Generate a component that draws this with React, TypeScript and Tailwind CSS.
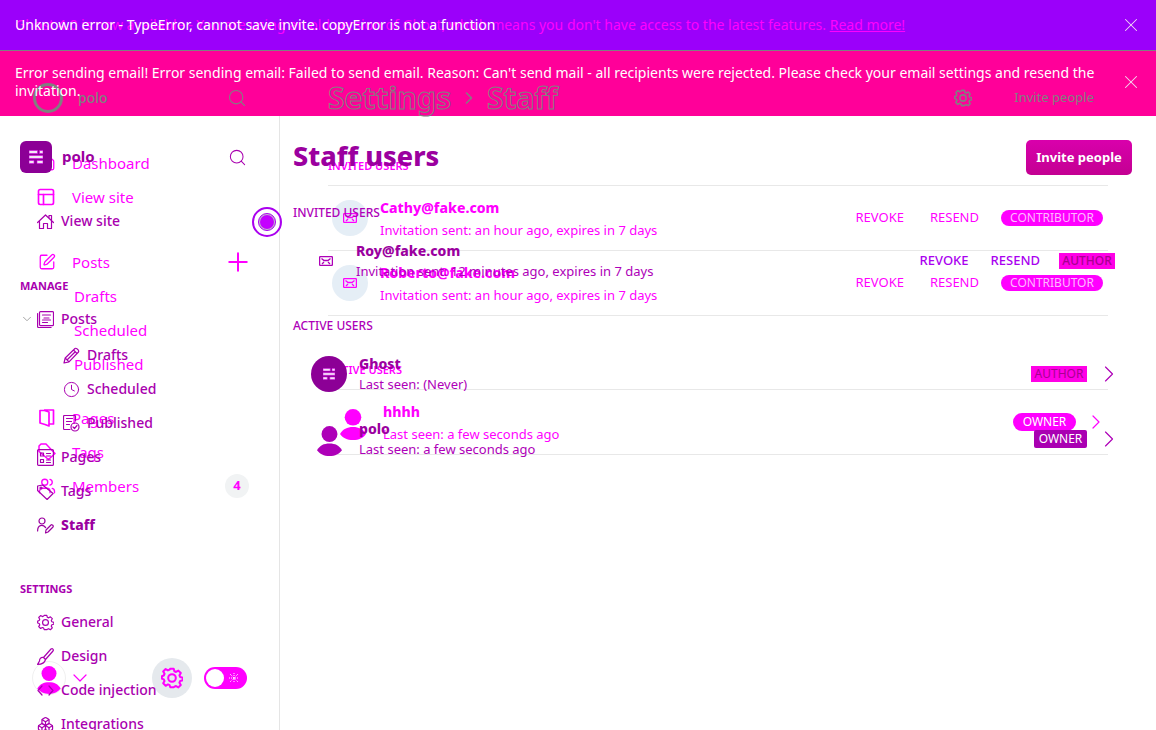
import React from "react";
import {
  House, Search, PanelsTopLeft, SquarePen, Plus, Tag, Users, ChevronDown, ChevronRight,
  Clock, Boxes, X,
} from "lucide-react";

function Gear({ className = "", stroke = 1.5 }: { className?: string; stroke?: number }) {
  return (
    <svg viewBox="-1 -1 26 26" className={className} fill="none" stroke="currentColor" strokeWidth={stroke} strokeLinejoin="round" aria-hidden="true">
      <path d="M10 1h4l.8 3 2 .9 2.700-1.600 2.900 2.900-1.600 2.700.900 2 3 .900v2.800l-3 .900-.9 2 1.600 2.700-2.900 2.900-2.700-1.600-2 .900L14 23h-4l-.8-2.500-2-.900-2.700 1.600-2.900-2.900 1.600-2.700-.9-2-2.300-.900v-2.800l2.300-.9.9-2-1.600-2.700 2.900-2.900 2.700 1.600 2-.9z" />
      <circle cx="12" cy="12" r="4.500" />
    </svg>
  );
}

function Glyph({ children }: { children: React.ReactNode }) {
  return (
    <svg viewBox="0 0 17 17" className="size-[17px] shrink-0" fill="none" stroke="currentColor" strokeWidth="1.2" strokeLinecap="round" strokeLinejoin="round" aria-hidden="true">
      {children}
    </svg>
  );
}

const HomeIcon = () => (
  <Glyph><path d="M.6 9.500L8.500 2l8 7.500M12 5V2.500h2.500v5M2.500 8v7.500h4v-5h4v5h4V8" /></Glyph>
);
const StackIcon = () => (
  <Glyph><rect x="2.500" y=".6" width="14" height="14" rx="1" /><path d="M.6 2.500v13a1 1 0 0 0 1 1h12.500M5.500 4h8M7 7h5M5.500 9h8M5.500 11.500h5" /></Glyph>
);
const PencilIcon = () => (
  <Glyph><path d="M1 16l1.200-5L12 1.500c1-1 4.500 2 3.500 3.500L6 14.800 1 16zM10.500 3l3.500 3.500M2.200 11L6 14.800M4.500 12.500l7.500-7.500" /></Glyph>
);
const PublishedIcon = () => (
  <Glyph><path d="M7 14.500H1.500a1 1 0 0 1-1-1v-12a1 1 0 0 1 1-1h10a1 1 0 0 1 1 1V6M3.500 3.500h6M3.500 6.500h5M3.500 9.500h3" /><circle cx="12" cy="12" r="4" /><path d="M10 12l1.500 1.500 2.500-3" /></Glyph>
);
const PagesIcon = () => (
  <Glyph><rect x=".6" y=".6" width="15.800" height="15.800" rx="1" /><path d="M3.500 4h3v3h-3zM3.500 10.500h3v3h-3zM9.500 4.500h4M9.500 7h4M9.500 11h4M9.500 13.500h4" /></Glyph>
);
const StaffIcon = () => (
  <Glyph><circle cx="5" cy="4" r="3" /><path d="M.6 14c0-6 5-7 8-3.500M8.500 16l.5-3 5-5c1-1 3 1 2 2l-5 5z" /></Glyph>
);
const TagIcon = () => (
  <Glyph><path d="M.6 7.500V3l5-1 10.500 8.500-6 6L.6 7.500z" /><circle cx="4" cy="5" r="1" /></Glyph>
);
const BrushIcon = () => (
  <Glyph><path d="M6.500 9.500L14 1c1.500-1 3 .5 2 2L8.500 11.500M6.500 9.500l2 2M6.500 9.500C3.500 9 2.500 11 2.500 13L.6 16.400c4 0 7-1 7.900-4.900" /></Glyph>
);
const CodeIcon = () => (
  <Glyph><path d="M5 4L1 8.500 5 13M12 4l4 4.500L12 13" /></Glyph>
);
const BookIcon = () => (
  <svg viewBox="0 0 18 18" className="size-[18px] shrink-0" fill="none" stroke="currentColor" strokeWidth="1.700" strokeLinejoin="round" aria-hidden="true">
    <path d="M2 1.500h4.500L11 3v14l-4-1.500-5-1.500zM6 1h9.500v14H11" />
  </svg>
);
const LabelIcon = () => (
  <svg viewBox="0 0 18 18" className="size-[18px] shrink-0" fill="none" stroke="currentColor" strokeWidth="1.500" strokeLinejoin="round" aria-hidden="true">
    <path d="M1 8.500V3l2-2h5l9 9.500-6.500 6z" />
  </svg>
);

function Mail() {
  return (
    <svg viewBox="0 0 14 10" className="h-[10px] w-[14px]" fill="none" stroke="currentColor" strokeWidth="1.300" aria-hidden="true">
      <rect x=".6" y=".6" width="12.800" height="8.800" rx="1" />
      <path d="M2.500 2.500L5 4.500h4l2.500-2M3 8l2-2M11 8L9 6" />
    </svg>
  );
}

function Person({ className }: { className: string }) {
  return (
    <svg viewBox="0 0 26 31" className={className} fill="currentColor" aria-hidden="true">
      <ellipse cx="13" cy="8.300" rx="8.300" ry="8.300" />
      <path d="M0 25c3-5 7-7 13-7s10 2 13 7c-3 4-7 6-13 6S3 29 0 25z" />
    </svg>
  );
}

function LogoMark({ className }: { className: string }) {
  return (
    <svg viewBox="0 0 14 14" className={className} aria-hidden="true">
      <path d="M0 .5h8.500v3H0zM10.500.5H14v3h-3.500zM0 5.500h14v3H0zM0 10.500h5v3H0zM8 10.500h6v3H8z" fill="#f3e6f5" stroke="#d400e6" strokeWidth=".6" />
    </svg>
  );
}

function SiteLink({ icon, label, extra }: { icon?: React.ReactNode; label: string; extra?: React.ReactNode }) {
  return (
    <li className="flex h-[34px] items-center">
      <a href="#" className={icon ? "flex items-center gap-4" : "pl-9"}>
        {icon}
        {label}
      </a>
      {extra && <span className="ml-auto flex">{extra}</span>}
    </li>
  );
}

function SiteSidebar() {
  return (
    <aside className="flex w-[280px] shrink-0 flex-col border-r border-[#e5e5e5] pt-[30px] pr-[30px] pb-8 pl-[38px] text-[15px] text-[#ff00ff]">
      <ul>
        <SiteLink icon={<House className="size-[18px]" strokeWidth={1.7} />} label="Dashboard" />
        <SiteLink icon={<PanelsTopLeft className="size-[20px] -ml-0.5" strokeWidth={2} />} label="View site" />
      </ul>
      <ul className="mt-[31px]">
        <SiteLink
          icon={<SquarePen className="size-[18px]" strokeWidth={1.7} />}
          label="Posts"
          extra={<button type="button" aria-label="New post" className="-mr-1"><Plus className="size-[30px]" strokeWidth={1.6} /></button>}
        />
        <SiteLink label="Drafts" />
        <SiteLink label="Scheduled" />
        <SiteLink label="Published" />
      </ul>
      <ul className="mt-5">
        <SiteLink icon={<BookIcon />} label="Pages" />
        <SiteLink icon={<LabelIcon />} label="Tags" />
        <SiteLink
          icon={<Users className="size-[18px]" strokeWidth={1.8} />}
          label="Members"
          extra={<span className="flex size-6 items-center justify-center rounded-full bg-[#f1f3f4] text-[13px] font-bold">4</span>}
        />
      </ul>
      <div className="mt-auto flex h-10 items-center">
        <button type="button" aria-label="Account" className="-ml-[6px] flex items-center gap-0.5">
          <span className="flex size-[34px] items-center justify-center rounded-full border border-[#f0f0f0] pt-1">
            <Person className="h-7 w-6 shrink-0" />
          </span>
          <ChevronDown className="size-6" strokeWidth={1.2} />
        </button>
        <div className="ml-auto flex items-center gap-3 pr-0.5">
          <button type="button" aria-label="Settings" className="flex size-10 items-center justify-center rounded-full bg-[#e5e9ed]">
            <Gear className="size-[22px]" stroke={2.4} />
          </button>
          <button type="button" role="switch" aria-checked="false" aria-label="Night mode" className="flex h-[22px] w-[43px] items-center justify-between rounded-full bg-[#ff00ff] px-0.5">
            <span className="size-[18px] rounded-full bg-white" />
            <svg viewBox="0 0 10 10" className="mr-1.5 size-2.5" stroke="#ffffff" strokeDasharray="1 1" aria-hidden="true">
              <path d="M1 1l8 8M9 1L1 9M5 0v10M0 5h10" />
            </svg>
          </button>
        </div>
      </div>
    </aside>
  );
}

function SectionTitle({ children }: { children: React.ReactNode }) {
  return <h2 className="flex h-[38px] items-center text-[11px] font-semibold">{children}</h2>;
}

function Invite({ email }: { email: string }) {
  return (
    <li className="flex h-[65px] items-center gap-3 border-t border-[#e8e8e8] pr-[5px] pl-1">
      <span className="flex size-9 shrink-0 items-center justify-center rounded-full bg-[#e5eef6]"><Mail /></span>
      <div className="pt-0.5">
        <h3 className="text-sm leading-[22px] font-extrabold">{email}</h3>
        <p className="text-[13px] leading-[22px]">Invitation sent: an hour ago, expires in 7 days</p>
      </div>
      <div className="ml-auto flex items-center text-[13px]">
        <a href="#" className="mr-[26px]">REVOKE</a>
        <a href="#" className="mr-[22px]">RESEND</a>
        <span className="flex h-4 w-[102px] items-center justify-center rounded-full bg-[#ff00ff] text-xs text-[#ffb8ff]">CONTRIBUTOR</span>
      </div>
    </li>
  );
}

function SiteWorkspace() {
  return (
    <div className="flex min-w-0 [grid-area:1/1]">
      <SiteSidebar />
      <main className="min-w-0 flex-1 px-12 pt-[31px] text-[#ff00ff]">
        <SectionTitle>INVITED USERS</SectionTitle>
        <ul className="border-b border-[#e8e8e8]">
          <Invite email="Cathy@fake.com" />
          <Invite email="Roberto@fake.com" />
        </ul>
        <div className="mt-[35px]"><SectionTitle>ACTIVE USERS</SectionTitle></div>
        <ul className="border-y border-[#e8e8e8]">
          <li className="flex h-16 items-center gap-3 pl-[7px]">
            <span className="flex size-9 shrink-0 items-end justify-center pt-1"><Person className="h-[31px] w-[26px]" /></span>
            <div className="pt-0.5">
              <h3 className="text-sm leading-[22px] font-extrabold">hhhh</h3>
              <p className="text-[13px] leading-[22px]">Last seen: a few seconds ago</p>
            </div>
            <div className="ml-auto flex items-center gap-2">
              <span className="flex h-[18px] w-[63px] items-center justify-center rounded-full bg-[#ff00ff] text-xs text-white">OWNER</span>
              <ChevronRight className="size-6" strokeWidth={1.2} />
            </div>
          </li>
        </ul>
      </main>
    </div>
  );
}

function AdminLink({ icon, label, sub = false, active = false }: { icon: React.ReactNode; label: string; sub?: boolean; active?: boolean }) {
  return (
    <li className={sub ? "pl-[43px]" : "pl-[17px]"}>
      <a href="#" className={active ? "flex h-[34px] items-center gap-[7px] font-extrabold text-[#9b009f]" : "flex h-[34px] items-center gap-[7px] font-medium"}>
        {icon}
        {label}
      </a>
    </li>
  );
}

function AdminSidebar() {
  return (
    <aside className="relative w-[280px] shrink-0 border-r border-[#e5e5e5] px-5 pt-[25px] text-sm text-[#a900af]">
      <div className="flex h-8 items-center">
        <span className="flex size-8 items-center justify-center rounded-md bg-[#8c0096]"><LogoMark className="size-[14px]" /></span>
        <strong className="ml-2.5 text-[15px] text-[#9b009f]">polo</strong>
        <button type="button" aria-label="Search" className="mr-3 ml-auto"><Search className="size-[19px]" strokeWidth={1.3} /></button>
      </div>
      <ul className="mt-[31px]">
        <AdminLink icon={<HomeIcon />} label="View site" />
      </ul>
      <h2 className="mt-8 flex h-8 items-center text-[11px] font-bold">MANAGE</h2>
      <ul>
        <li className="mb-0.5 flex h-[34px] items-center font-medium">
          <ChevronDown className="size-3.5 text-[#a5a5a5]" strokeWidth={1.7} />
          <a href="#" className="ml-[3px] flex items-center gap-[7px]"><StackIcon />Posts</a>
        </li>
        <AdminLink sub icon={<PencilIcon />} label="Drafts" />
        <AdminLink sub icon={<Clock className="size-[17px]" strokeWidth={1.4} />} label="Scheduled" />
        <AdminLink sub icon={<PublishedIcon />} label="Published" />
        <AdminLink icon={<PagesIcon />} label="Pages" />
        <AdminLink icon={<TagIcon />} label="Tags" />
        <AdminLink active icon={<StaffIcon />} label="Staff" />
      </ul>
      <h2 className="mt-[31px] flex h-8 items-center text-[11px] font-bold">SETTINGS</h2>
      <ul>
        <AdminLink icon={<Gear className="size-[17px]" stroke={1.8} />} label="General" />
        <AdminLink icon={<BrushIcon />} label="Design" />
        <AdminLink icon={<CodeIcon />} label="Code injection" />
        <AdminLink icon={<Boxes className="size-[17px]" strokeWidth={1.7} />} label="Integrations" />
      </ul>
      <button type="button" aria-label="Collapse sidebar" className="absolute top-[91px] -right-[3px] flex size-[30px] items-center justify-center rounded-full border-2 border-[#aa00ef]">
        <span className="flex size-[18px] items-center justify-center rounded-full border border-[#aa00ef] bg-[#c4bccb]">
          <span className="size-3.5 rounded-full bg-[#c400ff]" />
        </span>
      </button>
    </aside>
  );
}

function ActiveUser({ avatar, name, seen, badge }: { avatar: React.ReactNode; name: string; seen: string; badge: React.ReactNode }) {
  return (
    <li className="flex h-[65px] items-center gap-3 pr-[33px] pl-[18px]">
      <span className="flex size-9 shrink-0 items-center justify-center">{avatar}</span>
      <div>
        <h3 className="text-sm leading-5 font-extrabold text-[#9b009f]">{name}</h3>
        <p className="text-[13px] leading-5">{seen}</p>
      </div>
      <div className="ml-auto flex items-center gap-2">{badge}<ChevronRight className="size-7" strokeWidth={1} /></div>
    </li>
  );
}

const AuthorBadge = () => (
  <span className="flex h-4 w-14 items-center justify-center bg-[#ff00e6] text-xs text-[#a80090]">AUTHOR</span>
);

function AdminWorkspace() {
  return (
    <div className="flex min-w-0 [grid-area:1/1]">
      <AdminSidebar />
      <main className="min-w-0 flex-1 pt-6 pl-[13px] text-[#ae00b8]">
        <header className="flex h-[35px] items-center justify-between pr-6">
          <h1 className="pb-0.5 text-[27px] font-extrabold text-[#9b009f]">Staff users</h1>
          <button type="button" className="h-[35px] w-[106px] rounded-[5px] bg-gradient-to-b from-[#d900ac] to-[#c30092] text-[13px] font-bold text-white">Invite people</button>
        </header>
        <h2 className="mt-[26px] flex h-6 items-center text-xs font-medium">INVITED USERS</h2>
        <ul className="mt-1">
          <li className="flex h-16 items-center gap-3 pr-[41px] pl-[15px]">
            <span className="flex size-9 shrink-0 items-center justify-center"><Mail /></span>
            <div>
              <h3 className="text-sm leading-5 font-extrabold text-[#9b009f]">Roy@fake.com</h3>
              <p className="text-[13px] leading-5">Invitation sent: 12 minutes ago, expires in 7 days</p>
            </div>
            <div className="ml-auto flex items-center text-[13px] font-medium text-[#aa00ef]">
              <a href="#" className="mr-[22px]">REVOKE</a>
              <a href="#" className="mr-[19px]">RESEND</a>
              <AuthorBadge />
            </div>
          </li>
        </ul>
        <h2 className="mt-[21px] flex h-6 items-center text-xs font-medium">ACTIVE USERS</h2>
        <ul className="mt-[3px]">
          <ActiveUser
            avatar={<span className="flex size-9 items-center justify-center rounded-full bg-[#8c0096]"><LogoMark className="size-3" /></span>}
            name="Ghost"
            seen="Last seen: (Never)"
            badge={<AuthorBadge />}
          />
          <ActiveUser
            avatar={<span className="pt-1"><Person className="h-[30px] w-[25px]" /></span>}
            name="polo"
            seen="Last seen: a few seconds ago"
            badge={<span className="flex h-[18px] w-[53px] items-center justify-center rounded-xs bg-[#a900b2] text-xs text-white">OWNER</span>}
          />
        </ul>
      </main>
    </div>
  );
}

function CloseButton() {
  return (
    <button type="button" aria-label="Dismiss" className="ml-auto shrink-0 text-[#f3dcf3]"><X className="size-[22px]" strokeWidth={1.1} /></button>
  );
}

function Banners() {
  return (
    <header className="shrink-0">
      <div className="grid h-[51px] items-center border-b border-[#808080] bg-[#9b00fa] pr-[14px] pl-[15px] text-sm text-white">
        <p className="text-[#ff00ff] [grid-area:1/1]">
          Ghost 4.0 is now available - You are using an old version of Ghost, which means you don't have access to the latest features. <a href="#" className="underline">Read more!</a>
        </p>
        <div className="flex items-center [grid-area:1/1]">
          <p>Unknown error - TypeError, cannot save invite. copyError is not a function</p>
          <CloseButton />
        </div>
      </div>
      <div className="grid h-[65px] bg-[#ff0099]">
        <div className="flex items-center self-start pt-[29px] text-[#808080] [grid-area:1/1]">
          <div className="flex w-[280px] shrink-0 items-center pr-[33px] pl-[33px]">
            <span className="size-[30px] rounded-full border-[3px] border-[#808080]" />
            <strong className="ml-[15px] text-sm font-medium">polo</strong>
            <Search className="ml-auto size-5" strokeWidth={1.3} />
          </div>
          <h1 className="flex items-center gap-2 pl-12 text-3xl leading-9 font-bold text-[#ff0099] [-webkit-text-stroke:1px_#808080]">
            Settings <ChevronRight className="size-5 text-[#808080]" strokeWidth={1.8} /> Staff
          </h1>
          <div className="ml-auto flex items-center pr-[62px]">
            <button type="button" aria-label="Settings"><Gear className="size-[18px]" stroke={2.2} /></button>
            <button type="button" className="ml-[42px] text-[13px]">Invite people</button>
          </div>
        </div>
        <div className="flex items-center pr-[14px] pb-[3px] pl-[15px] text-sm leading-[18px] text-white [grid-area:1/1]">
          <p className="pr-6">
            Error sending email! Error sending email: Failed to send email. Reason: Can't send mail - all recipients were rejected. Please check your email settings and resend the invitation.
          </p>
          <CloseButton />
        </div>
      </div>
    </header>
  );
}

export default function App() {
  return (
    <div className="flex h-screen flex-col overflow-hidden bg-white font-['Noto_Sans','Open_Sans',sans-serif]">
      <Banners />
      <div className="grid min-h-0 flex-1 grid-cols-1 grid-rows-1">
        <SiteWorkspace />
        <AdminWorkspace />
      </div>
    </div>
  );
}
